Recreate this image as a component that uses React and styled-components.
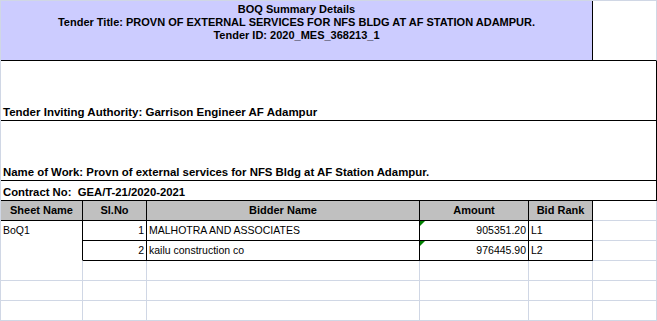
import React from "react";
import styled, { createGlobalStyle } from "styled-components";

const GRID = "#d0d7e5";
const INK = "#000";

const GlobalStyle = createGlobalStyle`
    html, body {
        margin: 0;
        padding: 0;
        background: #fff;
    }
    body {
        font-family: "Liberation Sans", Arial, sans-serif;
        color: #000;
    }
`;

const Sheet = styled.div`
    display: grid;
    grid-template-columns: 82px 64px 273px 109px 64px 64px;
    grid-template-rows: 60px 60px 60px repeat(7, 20px);
    width: 657px;
    border-top: 1px solid ${GRID};
    border-left: 1px solid ${GRID};
    box-sizing: border-box;
`;

const Cell = styled.div`
    position: relative;
    box-sizing: border-box;
    grid-column: span ${(p) => p.$span || 1};
    grid-row: span ${(p) => p.$rows || 1};
    display: flex;
    flex-direction: column;
    justify-content: ${(p) => (p.$valign === "top" ? "flex-start" : p.$valign === "center" ? "center" : "flex-end")};
    align-items: ${(p) => (p.$align === "right" ? "flex-end" : p.$align === "center" ? "center" : "flex-start")};
    padding: 0 2px ${(p) => (p.$valign === "top" ? "0" : "1px")} 2px;
    background: ${(p) => p.$bg || "#fff"};
    border-right: 1px solid ${(p) => (p.$right ? INK : GRID)};
    border-bottom: 1px solid ${(p) => (p.$bottom === "none" ? "#fff" : p.$bottom ? INK : GRID)};
    font-size: ${(p) => p.$size || (p.$bold ? "11px" : "10.5px")};
    font-weight: ${(p) => (p.$bold ? 700 : 400)};
    line-height: 13px;
    white-space: pre;
    overflow: hidden;
`;

const TitleBlock = styled.div`
    width: 100%;
    padding-top: 2px;
    text-align: center;
    font-size: 11px;
    font-weight: 700;
    line-height: 13px;
`;

const Flag = styled.span`
    position: absolute;
    top: 0;
    left: 0;
    width: 0;
    height: 0;
    border-top: 5px solid #008000;
    border-right: 5px solid transparent;
`;

const bids = [
    { no: 1, name: "MALHOTRA AND ASSOCIATES", amount: "905351.20", rank: "L1" },
    { no: 2, name: "kailu construction co", amount: "976445.90", rank: "L2" },
];

const headers = ["Sheet Name", "Sl.No", "Bidder Name", "Amount", "Bid Rank"];

const App = () => {
    return (
        <>
            <GlobalStyle />
            <Sheet>
                {/* title row */}
                <Cell $span={5} $bg="#ccccff" $right $bottom $valign="top">
                    <TitleBlock>
                        <div>BOQ Summary Details</div>
                        <div>Tender Title: PROVN OF EXTERNAL SERVICES FOR NFS BLDG AT AF STATION ADAMPUR.</div>
                        <div>Tender ID: 2020_MES_368213_1</div>
                    </TitleBlock>
                </Cell>
                <Cell $bottom />

                <Cell $span={6} $right $bottom $bold $size="11.5px">
                    Tender Inviting Authority: Garrison Engineer AF Adampur
                </Cell>
                <Cell $span={6} $right $bottom $bold $size="11.4px">
                    Name of Work: Provn of external services for NFS Bldg at AF Station Adampur.
                </Cell>
                <Cell $span={6} $right $bottom $bold $size="11.3px">
                    {"Contract No:  GEA/T-21/2020-2021"}
                </Cell>

                {/* table header */}
                {headers.map((h) => (
                    <Cell key={h} $bg="#c0c0c0" $right $bottom $bold $align="center" $valign="center">
                        {h}
                    </Cell>
                ))}
                <Cell />

                {/* bids */}
                <Cell $rows={2} $right $bottom="none" $valign="top">
                    <div style={{ paddingTop: 3 }}>BoQ1</div>
                </Cell>
                {bids.map((b) => (
                    <React.Fragment key={b.no}>
                        <Cell $right $bottom $align="right" $valign="center">{b.no}</Cell>
                        <Cell $right $bottom $valign="center">{b.name}</Cell>
                        <Cell $right $bottom $align="right" $valign="center">
                            <Flag />
                            {b.amount}
                        </Cell>
                        <Cell $right $bottom $valign="center">{b.rank}</Cell>
                        <Cell />
                    </React.Fragment>
                ))}

                {/* empty grid rows */}
                {Array.from({ length: 18 }).map((_, i) => (
                    <Cell key={i} />
                ))}
            </Sheet>
        </>
    );
};

export default App;
